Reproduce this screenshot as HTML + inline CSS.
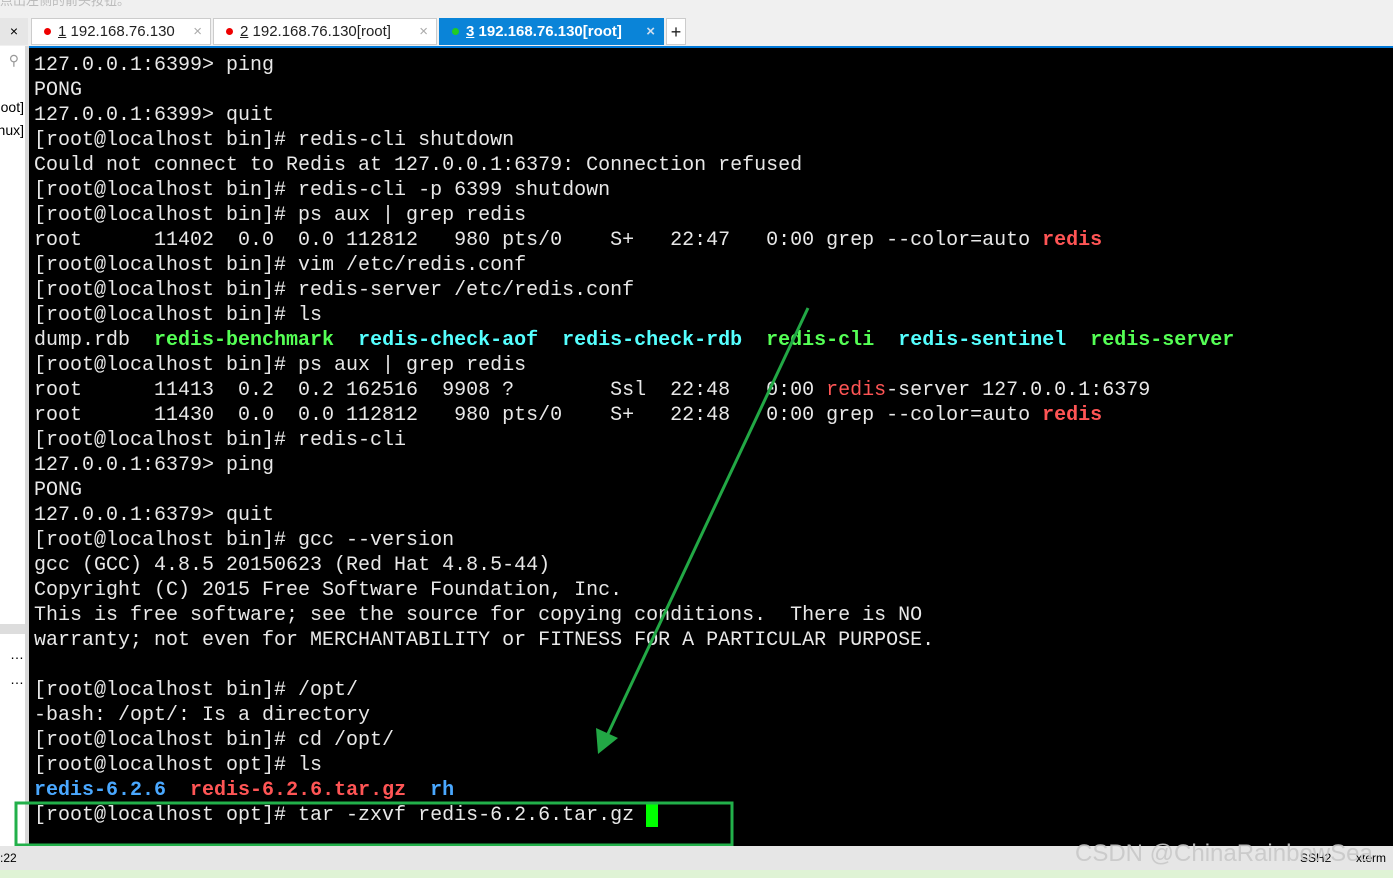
<!DOCTYPE html>
<html><head><meta charset="utf-8"><style>
body{margin:0;width:1393px;height:878px;overflow:hidden;background:#f0f0f0;position:relative;font-family:"Liberation Sans","Noto Sans CJK SC",sans-serif}
.side{position:absolute;left:0;top:46px;width:25px;height:800px;background:#fff;font-size:14px;color:#000;overflow:hidden}
.side div{position:absolute;right:1px;white-space:nowrap}
.sb{position:absolute;left:25px;top:46px;width:4px;height:800px;background:#d8d8d8}
.term{position:absolute;left:29px;top:46px;width:1364px;height:800px;background:#000;border-top:2px solid #0078d7;box-sizing:border-box}
pre{margin:0;position:absolute;left:5px;top:5px;font:20px/25px "Liberation Mono","DejaVu Sans Mono",monospace;color:#e8e8e8}
.r{color:#ff5555}.g{color:#55ff55;font-weight:bold}.c{color:#55ffff;font-weight:bold}.b{color:#4aa8ff;font-weight:bold}.rb{color:#ff5555;font-weight:bold}
.tab{position:absolute;top:18px;height:27px;background:#fff;border:1px solid #ccc;box-sizing:border-box;font-size:15px;line-height:26px;color:#222;padding-left:12px}
.tab .d{display:inline-block;width:7px;height:7px;border-radius:50%;background:#e00;margin-right:7px;vertical-align:1px}
.tab .x{position:absolute;right:8px;top:0;color:#aaa}
</style></head><body>
<div style="position:absolute;left:0;top:0;color:#bbb;font-size:13px;line-height:10px;top:-4px">点出左侧的箭头按钮。</div>
<div style="position:absolute;left:0;top:18px;width:28px;height:27px;background:#e6e6e6;font-size:14px;line-height:27px;text-align:center">×</div>
<div class="tab" style="left:31px;width:180px"><span class="d"></span><u>1</u> 192.168.76.130<span class="x">×</span></div>
<div class="tab" style="left:213px;width:224px"><span class="d"></span><u>2</u> 192.168.76.130[root]<span class="x">×</span></div>
<div class="tab" style="left:439px;width:225px;background:#0a84d8;color:#fff;font-weight:bold;border-color:#0a84d8"><span class="d" style="background:#2c2"></span><u>3</u> 192.168.76.130[root]<span class="x" style="color:#cde">×</span></div>
<div class="tab" style="left:666px;width:20px;padding:0;text-align:center;font-size:18px">+</div>
<div class="side"><div style="top:6px;right:6px;color:#999">&#9906;</div><div style="top:53px">oot]</div><div style="top:76px">nux]</div>
<div style="top:578px;left:0;width:25px;height:10px;background:#ddd"></div><div style="top:600px">…</div><div style="top:625px">…</div></div>
<div class="sb"></div>
<div class="term"><pre>127.0.0.1:6399&gt; ping
PONG
127.0.0.1:6399&gt; quit
[root@localhost bin]# redis-cli shutdown
Could not connect to Redis at 127.0.0.1:6379: Connection refused
[root@localhost bin]# redis-cli -p 6399 shutdown
[root@localhost bin]# ps aux | grep redis
root      11402  0.0  0.0 112812   980 pts/0    S+   22:47   0:00 grep --color=auto <span class="rb">redis</span>
[root@localhost bin]# vim /etc/redis.conf
[root@localhost bin]# redis-server /etc/redis.conf
[root@localhost bin]# ls
dump.rdb  <span class="g">redis-benchmark</span>  <span class="c">redis-check-aof</span>  <span class="c">redis-check-rdb</span>  <span class="g">redis-cli</span>  <span class="c">redis-sentinel</span>  <span class="g">redis-server</span>
[root@localhost bin]# ps aux | grep redis
root      11413  0.2  0.2 162516  9908 ?        Ssl  22:48   0:00 <span class="r">redis</span>-server 127.0.0.1:6379
root      11430  0.0  0.0 112812   980 pts/0    S+   22:48   0:00 grep --color=auto <span class="rb">redis</span>
[root@localhost bin]# redis-cli
127.0.0.1:6379&gt; ping
PONG
127.0.0.1:6379&gt; quit
[root@localhost bin]# gcc --version
gcc (GCC) 4.8.5 20150623 (Red Hat 4.8.5-44)
Copyright (C) 2015 Free Software Foundation, Inc.
This is free software; see the source for copying conditions.  There is NO
warranty; not even for MERCHANTABILITY or FITNESS FOR A PARTICULAR PURPOSE.

[root@localhost bin]# /opt/
-bash: /opt/: Is a directory
[root@localhost bin]# cd /opt/
[root@localhost opt]# ls
<span class="b">redis-6.2.6</span>  <span class="rb">redis-6.2.6.tar.gz</span>  <span class="b">rh</span>
[root@localhost opt]# tar -zxvf redis-6.2.6.tar.gz <span style="background:#0f0"> </span></pre></div>
<svg style="position:absolute;left:0;top:0" width="1393" height="878">
<line x1="808" y1="308" x2="606" y2="738" stroke="#22a845" stroke-width="3"/>
<polygon points="598,754 596,728 618,738" fill="#22a845"/>
<rect x="16" y="803" width="716" height="42" fill="none" stroke="#22b04a" stroke-width="3"/>
</svg>
<div style="position:absolute;left:0;top:846px;width:1393px;height:24px;background:#e6e6e6;font-size:12px;line-height:24px">:22<span style="position:absolute;left:1300px">SSH2</span><span style="position:absolute;left:1356px">xterm</span></div>
<div style="position:absolute;left:1075px;top:840px;color:rgba(200,200,200,.9);font-size:24px">CSDN @ChinaRainbowSea</div>
<div style="position:absolute;left:0;top:870px;width:1393px;height:8px;background:#dff3d5"></div>
</body></html>
